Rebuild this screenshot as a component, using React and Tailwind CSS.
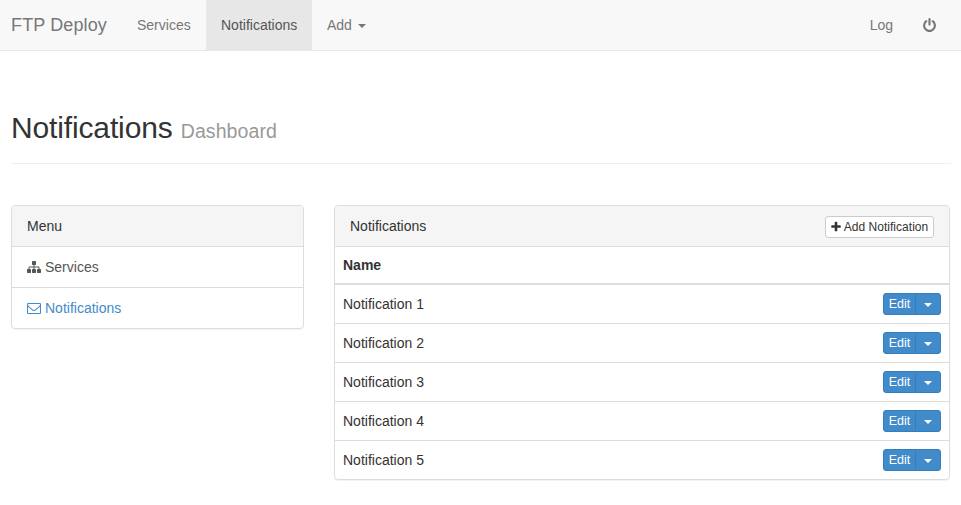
const PATHS = {
  power:
    'M1664 896q0 156-61 298t-164 245-245 164-298 61-298-61-245-164-164-245-61-298q0-182 80.5-343t226.5-270q43-32 95.5-25t83.5 50q32 42 24.5 94.5t-49.5 84.5q-98 74-151.5 181t-53.5 228q0 104 40.5 198.5t109.5 163.5 163.5 109.5 198.5 40.5 198.5-40.5 163.5-109.5 109.5-163.5 40.5-198.5q0-121-53.5-228t-151.5-181q-42-32-49.5-84.5t24.5-94.5q31-43 84-50t95 25q146 109 226.5 270t80.5 343zm-640-768v640q0 52-38 90t-90 38-90-38-38-90v-640q0-52 38-90t90-38 90 38 38 90z',
  envelope:
    'M1664 1504v-768q-32 36-69 66-268 206-426 338-51 43-83 67t-86.5 48.5-102.5 24.5h-2q-48 0-102.5-24.5t-86.5-48.5-83-67q-158-132-426-338-37-30-69-66v768q0 13 9.5 22.5t22.5 9.5h1472q13 0 22.5-9.5t9.5-22.5zm0-1051v-24.5l-.5-13-3-12.5-5.5-9-9-7.5-14-2.5h-1472q-13 0-22.5 9.5t-9.5 22.5q0 168 147 284 193 152 401 317 6 5 35 29.5t46 37.5 44.5 31.5 50.5 27.5 43 9h2q20 0 43-9t50.5-27.5 44.5-31.5 46-37.5 35-29.5q208-165 401-317 54-43 100.5-115.5t46.5-131.5zm128-37v1088q0 66-47 113t-113 47h-1472q-66 0-113-47t-47-113v-1088q0-66 47-113t113-47h1472q66 0 113 47t47 113z',
  sitemap:
    'M1792 1248v320q0 40-28 68t-68 28h-320q-40 0-68-28t-28-68v-320q0-40 28-68t68-28h96v-192h-512v192h96q40 0 68 28t28 68v320q0 40-28 68t-68 28h-320q-40 0-68-28t-28-68v-320q0-40 28-68t68-28h96v-192h-512v192h96q40 0 68 28t28 68v320q0 40-28 68t-68 28h-320q-40 0-68-28t-28-68v-320q0-40 28-68t68-28h96v-192q0-52 38-90t90-38h512v-192h-96q-40 0-68-28t-28-68v-320q0-40 28-68t68-28h320q40 0 68 28t28 68v320q0 40-28 68t-68 28h-96v192h512q52 0 90 38t38 90v192h96q40 0 68 28t28 68z',
  plus:
    'M1600 736v192q0 40-28 68t-68 28h-416v416q0 40-28 68t-68 28h-192q-40 0-68-28t-28-68v-416h-416q-40 0-68-28t-28-68v-192q0-40 28-68t68-28h416v-416q0-40 28-68t68-28h192q40 0 68 28t28 68v416h416q40 0 68 28t28 68z',
};

function Icon({ name, className }) {
  return (
    <svg viewBox="0 0 1792 1792" fill="currentColor" aria-hidden="true" className={className}>
      <path d={PATHS[name]} />
    </svg>
  );
}

function Caret() {
  return <span className="inline-block border-x-4 border-t-4 border-x-transparent border-t-current" />;
}

function Navbar() {
  return (
    <nav className="flex h-[51px] border-b border-[#e7e7e7] bg-[#f8f8f8] pr-[9px] pl-[11px] text-[#777]">
      <a href="#" className="w-[111px] pt-[15px] text-lg leading-5 tracking-[0.13px]">FTP Deploy</a>
      <a href="#" className="w-[84px] pt-[15px] pl-[15px]">Services</a>
      <a href="#" className="w-[106px] bg-[#e7e7e7] pt-[15px] pl-[15px] text-[#555]">Notifications</a>
      <a href="#" className="flex h-[50px] items-center gap-1.5 pl-[15px]">
        Add <span className="flex pt-px"><Caret /></span>
      </a>
      <div className="ml-auto flex h-[50px] items-center">
        <a href="#" className="px-[15px]">Log</a>
        <a href="#" className="pr-[15px] pl-3.5" aria-label="Log out">
          <Icon name="power" className="size-[15px]" />
        </a>
      </div>
    </nav>
  );
}

function MenuPanel() {
  return (
    <aside className="h-[124px] w-[293px] overflow-hidden rounded border border-[#ddd] shadow-[0_1px_1px_rgba(0,0,0,0.05)]">
      <div className="flex h-10 items-center bg-[#f5f5f5] px-[15px]">Menu</div>
      <a href="#" className="flex h-[41px] items-center gap-1 border-t border-[#ddd] px-[15px] text-[#555]">
        <Icon name="sitemap" className="size-3.5" />
        Services
      </a>
      <a href="#" className="flex h-[41px] items-center gap-1 border-t border-[#ddd] px-[15px] text-[#428bca]">
        <Icon name="envelope" className="size-3.5" />
        Notifications
      </a>
    </aside>
  );
}

function EditButton() {
  return (
    <div className="flex h-[22px] text-xs leading-[18px] text-white">
      <button className="w-[33px] rounded-l-[3px] border border-[#357ebd] bg-[#428bca] text-[12.5px]">Edit</button>
      <button className="-ml-px flex w-[26px] items-center justify-center rounded-r-[3px] border border-[#357ebd] bg-[#428bca] pt-0.5" aria-label="More">
        <Caret />
      </button>
    </div>
  );
}

function NotificationsPanel() {
  return (
    <section className="w-[616px] rounded border border-[#ddd] shadow-[0_1px_1px_rgba(0,0,0,0.05)]">
      <div className="flex h-10 items-center justify-between rounded-t-[3px] bg-[#f5f5f5] px-[15px]">
        <span>Notifications</span>
        <button className="mt-0.5 flex h-[22px] w-[109px] items-center justify-center gap-0.5 rounded-[3px] border border-[#ccc] bg-white text-xs whitespace-nowrap">
          <Icon name="plus" className="-ml-px size-3" />
          <span className="tracking-[0.03px]">Add Notification</span>
        </button>
      </div>
      <div className="flex h-[37px] items-center border-t border-[#ddd] px-2 font-bold">Name</div>
      <div className="border-t border-[#ddd]">
        {[1, 2, 3, 4, 5].map((n) => (
          <div key={n} className="flex h-[39px] items-center justify-between border-t border-[#ddd] px-2">
            <span>Notification {n}</span>
            <EditButton />
          </div>
        ))}
      </div>
    </section>
  );
}

export default function App() {
  return (
    <div className="h-[505px] overflow-hidden bg-white font-['Liberation_Sans',Arial,sans-serif] text-sm leading-5 text-[#333]">
      <Navbar />
      <main className="pr-[10px] pl-[11px]">
        <header className="mt-[57px] h-[56px] border-b border-[#eee]">
          <h1 className="text-[30px] leading-[40px] tracking-[-0.14px]">
            Notifications <small className="text-[19.5px] tracking-[0.08px] text-[#999]">Dashboard</small>
          </h1>
        </header>
        <div className="mt-[41px] flex items-start gap-[30px]">
          <MenuPanel />
          <NotificationsPanel />
        </div>
      </main>
    </div>
  );
}
